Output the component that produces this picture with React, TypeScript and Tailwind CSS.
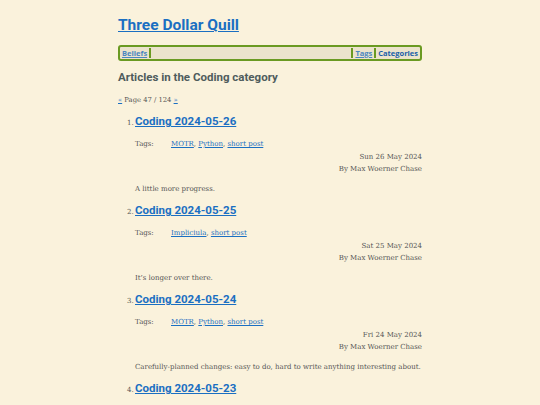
import React from "react";

const posts = [
  { n: 1, title: "Coding 2024-05-26", tags: ["MOTR", "Python", "short post"], date: "Sun 26 May 2024", summary: "A little more progress." },
  { n: 2, title: "Coding 2024-05-25", tags: ["Impliciula", "short post"], date: "Sat 25 May 2024", summary: "It\u2019s longer over there." },
  { n: 3, title: "Coding 2024-05-24", tags: ["MOTR", "Python", "short post"], date: "Fri 24 May 2024", summary: "Carefully-planned changes: easy to do, hard to write anything interesting about." },
  { n: 4, title: "Coding 2024-05-23", tags: ["MOTR", "Python", "short post"], date: "Thu 23 May 2024", summary: "More." },
];

const head = { fontFamily: 'Roboto, "Open Sans", sans-serif' };
const body = { fontFamily: '"DejaVu Serif", "Liberation Serif", serif' };

export default function App() {
  return (
    <div className="w-[540px] h-[405px] overflow-hidden bg-[#faf2dc] text-[#555]" style={body}>
      <div className="w-[304px] mx-auto pt-[14px]">
        <h1 className="text-[15.5px] leading-[22px] font-bold text-[#1a6fc2] underline" style={head}>Three Dollar Quill</h1>
        <nav className="mt-[9px] h-[16px] border-2 border-[#6a9a22] rounded-[3px] bg-[#ebe3cc] flex items-center text-[7.5px] font-bold" style={{ fontFamily: '"Open Sans", sans-serif' }}>
          <a className="pl-[2px] pr-[2px] text-[#4a86c0] underline border-r-2 border-[#6a9a22] leading-[10px]">Beliefs</a>
          <div className="flex-1" />
          <a className="px-[2px] text-[#4a86c0] underline border-l-2 border-[#6a9a22] leading-[10px]">Tags</a>
          <a className="px-[2px] text-[#1a5ea8] border-l-2 border-[#6a9a22] leading-[10px]">Categories</a>
        </nav>
        <h2 className="mt-[8px] text-[11.5px] leading-[16px] font-bold text-[#4f5c5c]" style={head}>Articles in the Coding category</h2>
        <div className="mt-[10px] text-[6.8px] leading-[10px]">
          <a className="text-[#1a6fc2] underline">&laquo;</a> Page 47 / 124 <a className="text-[#1a6fc2] underline">&raquo;</a>
        </div>
        <ol className="mt-[7px] pl-[17px]">
          {posts.map((p) => (
            <li key={p.n} className="h-[89px]">
              <div className="flex items-baseline">
                <span className="text-[7px] text-[#555] w-[0px] relative -left-[8px]">{p.n}.</span>
                <a className="text-[11.5px] leading-[18px] font-bold text-[#1a6fc2] underline" style={head}>{p.title}</a>
              </div>
              <div className="mt-[8px] flex text-[7px] leading-[12px]">
                <span className="w-[36px]">Tags:</span>
                <span>
                  {p.tags.map((t, i) => (
                    <React.Fragment key={t}>
                      <a className="text-[#1a6fc2] underline">{t}</a>
                      {i < p.tags.length - 1 ? ", " : ""}
                    </React.Fragment>
                  ))}
                </span>
              </div>
              <div className="mt-[1px] text-right text-[7px] leading-[12px]">{p.date}</div>
              <div className="text-right text-[7px] leading-[12px]">By Max Woerner Chase</div>
              <p className="mt-[8px] text-[7px] leading-[12px]">{p.summary}</p>
            </li>
          ))}
        </ol>
      </div>
    </div>
  );
}
